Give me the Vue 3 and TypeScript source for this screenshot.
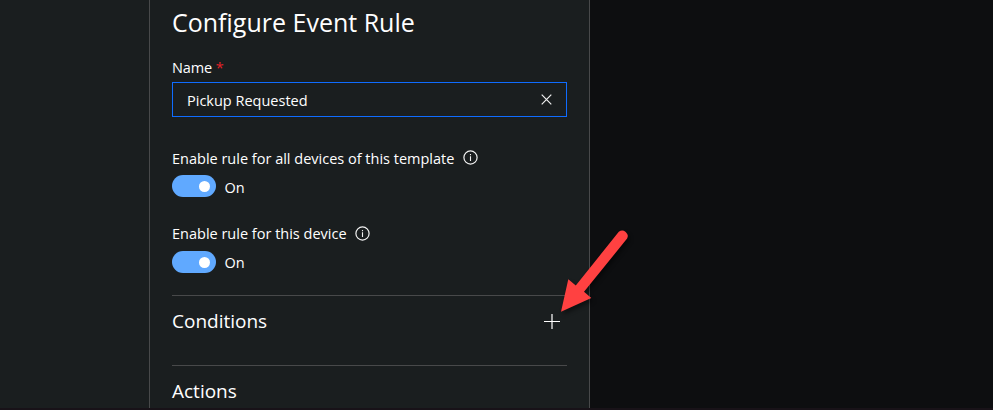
<script setup lang="ts">
import { ref } from 'vue'

interface ToggleOption {
  id: string
  label: string
  enabled: boolean
}

const name = ref('Pickup Requested')
const toggles = ref<ToggleOption[]>([
  { id: 'template', label: 'Enable rule for all devices of this template', enabled: true },
  { id: 'device', label: 'Enable rule for this device', enabled: true },
])
</script>

<template>
  <div class="page">
    <aside class="rail"></aside>
    <main class="panel">
      <h1 class="title">Configure Event Rule</h1>
      <div class="label name-label">Name <span class="required">*</span></div>
      <div class="field">
        <span class="value">{{ name }}</span>
        <svg class="clear" width="11" height="11" viewBox="0 0 11 11">
          <path d="M.7.7 10.3 10.3M10.3.7.7 10.3" fill="none" stroke="#f0f0f0" stroke-width="1.2" />
        </svg>
      </div>
      <section v-for="t in toggles" :key="t.id" class="option" :class="t.id">
        <div class="label option-label">
          <span class="option-text">{{ t.label }}</span>
          <svg class="info" width="15" height="15" viewBox="0 0 15 15">
            <circle cx="7.5" cy="7.5" r="6.6" fill="none" stroke="#f2f2f2" stroke-width="1.2" />
            <path d="M7.5 6.3v4.7M7.5 4v1.2" stroke="#f2f2f2" stroke-width="1.1" />
          </svg>
        </div>
        <div class="switch-row">
          <button class="switch" role="switch" :aria-checked="t.enabled" @click="t.enabled = !t.enabled">
            <span class="knob"></span>
          </button>
          <span class="state">{{ t.enabled ? 'On' : 'Off' }}</span>
        </div>
      </section>
      <section class="group">
        <h2 class="heading">Conditions</h2>
        <svg class="add" width="16" height="16" viewBox="0 0 16 16">
          <path d="M0 7.5h16M8 0v15" fill="none" stroke="#fff" stroke-width="1.2" />
        </svg>
      </section>
      <section class="group">
        <h2 class="heading">Actions</h2>
      </section>
    </main>
    <div class="backdrop"></div>
    <svg class="arrow" width="90" height="100" viewBox="550 225 90 100">
      <path
        d="M618.8 231.8a5.5 5.5 0 0 1 8.3 6.8L584 291.8 591.3 298 561 311.8 568.3 279.2 575.8 285.4Z"
        fill="#ff4141"
      />
    </svg>
    <div class="edge"></div>
  </div>
</template>

<style>
body {
  margin: 0;
  background: #0d0e10;
}
</style>

<style scoped>
.page {
  position: relative;
  display: grid;
  grid-template-columns: 149px 441px 1fr;
  width: 993px;
  height: 410px;
  overflow: hidden;
  background: #1a1e1f;
  color: #fff;
  font-family: "Open Sans", "Noto Sans", sans-serif;
  font-size: 14.5px;
}
.panel {
  box-sizing: border-box;
  min-width: 0;
  height: 410px;
  overflow: hidden;
  padding: 0 22px;
  border: solid #48494a;
  border-width: 0 1px;
}
.title {
  height: 58px;
  margin: 0;
  font-size: 25px;
  font-weight: 400;
  line-height: 44px;
  white-space: nowrap;
}
.label {
  line-height: 20px;
  white-space: nowrap;
}
.name-label {
  height: 24px;
  letter-spacing: -0.1px;
}
.required {
  color: #e82127;
}
.field {
  box-sizing: border-box;
  display: flex;
  align-items: center;
  justify-content: space-between;
  height: 35px;
  padding: 2px 14px 0;
  border: 1px solid #0f6cff;
}
.clear {
  margin: -2px 0 0 0;
}
.option {
  padding-top: 32px;
}
.option.device {
  padding-top: 27px;
}
.option-label {
  display: flex;
  height: 26px;
}
.device .option-label {
  height: 27px;
}
.info {
  margin: 1px 0 0 9px;
}
.device .info {
  margin: 2px 0 0 8.5px;
}
.switch-row {
  display: flex;
  height: 22px;
}
.switch {
  display: flex;
  align-items: center;
  justify-content: flex-end;
  width: 44px;
  height: 22px;
  padding: 0 6px;
  border: 0;
  border-radius: 11px;
  background: #60a9ff;
}
.switch[aria-checked="false"] {
  justify-content: flex-start;
}
.knob {
  width: 11px;
  height: 11px;
  border-radius: 50%;
  background: #fff;
}
.state {
  margin-left: 8.5px;
  line-height: 25px;
}
.device .state {
  line-height: 23px;
}
.group {
  box-sizing: border-box;
  display: flex;
  justify-content: space-between;
  height: 70px;
  border-top: 1px solid #48494a;
}
.option + .group {
  margin-top: 22px;
}
.heading {
  margin: 0;
  font-size: 19px;
  font-weight: 400;
  line-height: 50px;
}
.add {
  margin: 18px 7px 0 0;
}
.backdrop {
  background: #0d0e10;
}
.arrow {
  position: absolute;
  left: 550px;
  top: 225px;
  filter: drop-shadow(2px 3px 2px rgba(0, 0, 0, 0.45));
}
.edge {
  position: absolute;
  left: 0;
  right: 0;
  bottom: 0;
  height: 2px;
  background: #181218;
}
</style>
